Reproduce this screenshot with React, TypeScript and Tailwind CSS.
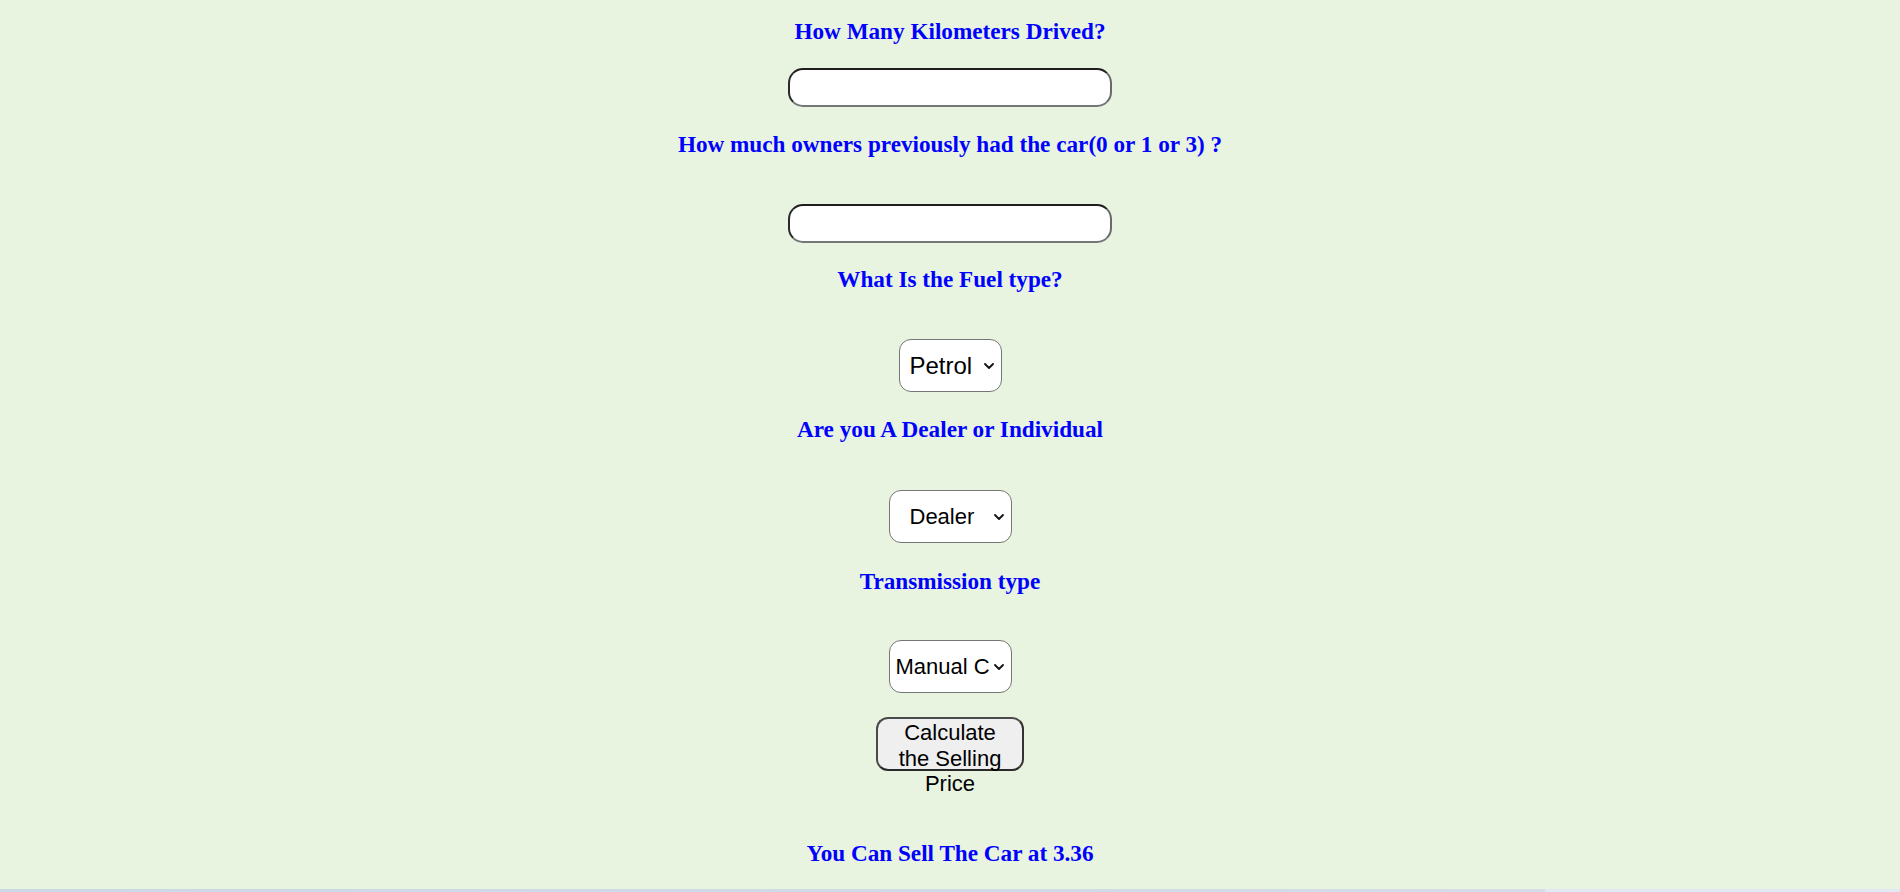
import { useState } from 'react'

const headingCls = "font-['Liberation_Serif',serif] text-[23.2px] leading-[26px] font-bold text-[#0000ff] text-center"
const inputCls = "w-[324px] h-[39px] rounded-[15px] border-2 border-t-[#1e1e1e] border-l-[#2a2a2a] border-b-[#767676] border-r-[#6a6a6a] bg-white px-3 outline-none"
const selectCls = "h-[53px] rounded-[12px] border border-[#767676] bg-white appearance-none font-['Liberation_Sans',Arial,sans-serif] text-black outline-none"

function Chevron() {
  return (
    <svg
      className="pointer-events-none absolute right-[8px] top-1/2 -translate-y-1/2"
      width="10"
      height="7"
      viewBox="0 0 10 7"
      fill="none"
    >
      <polyline points="1,1.5 5,5.5 9,1.5" stroke="#111" strokeWidth="1.8" strokeLinecap="round" strokeLinejoin="round" />
    </svg>
  )
}

export default function App() {
  const [kms, setKms] = useState('')
  const [owners, setOwners] = useState('')
  const [fuel, setFuel] = useState('Petrol')
  const [seller, setSeller] = useState('Dealer')
  const [trans, setTrans] = useState('Manual Car')

  return (
    <div className="h-[892px] bg-[#e8f4df] flex flex-col overflow-hidden">
      <div className="flex-1 flex flex-col items-center pt-[18px]">
        <h2 className={headingCls}>How Many Kilometers Drived?</h2>
        <input
          value={kms}
          onChange={(e) => setKms(e.target.value)}
          className={`${inputCls} mt-[24px]`}
        />

        <h2 className={`${headingCls} mt-[24px]`}>How much owners previously had the car(0 or 1 or 3) ?</h2>
        <input
          value={owners}
          onChange={(e) => setOwners(e.target.value)}
          className={`${inputCls} mt-[47px]`}
        />

        <h2 className={`${headingCls} mt-[23px]`}>What Is the Fuel type?</h2>
        <div className="relative mt-[47px]">
          <select
            value={fuel}
            onChange={(e) => setFuel(e.target.value)}
            className={`${selectCls} text-[24px] w-[103px] pl-[10px] pr-[20px]`}
          >
            <option>Petrol</option>
            <option>Diesel</option>
            <option>CNG</option>
          </select>
          <Chevron />
        </div>

        <h2 className={`${headingCls} mt-[24px]`}>Are you A Dealer or Individual</h2>
        <div className="relative mt-[48px]">
          <select
            value={seller}
            onChange={(e) => setSeller(e.target.value)}
            className={`${selectCls} text-[22px] w-[123px] pl-[20px] pr-[20px]`}
          >
            <option>Dealer</option>
            <option>Individual</option>
          </select>
          <Chevron />
        </div>

        <h2 className={`${headingCls} mt-[25px]`}>Transmission type</h2>
        <div className="relative mt-[46px]">
          <select
            value={trans}
            onChange={(e) => setTrans(e.target.value)}
            className={`${selectCls} text-[22px] w-[123px] pl-[6px] pr-[21px]`}
          >
            <option>Manual Car</option>
            <option>Automatic Car</option>
          </select>
          <Chevron />
        </div>

        <button className="mt-[24px] w-[148px] h-[54px] rounded-[12px] border-2 border-[#4a4a4a] border-b-[#2a2a2a] border-r-[#333] bg-[#efefef] px-[16px] pt-[1px] flex flex-col items-center justify-start overflow-visible font-['Liberation_Sans',Arial,sans-serif] text-[22px] leading-[25.5px] text-black text-center">
          <span className="block">Calculate the Selling Price</span>
        </button>

        <h3 className={`${headingCls} mt-[69px]`}>You Can Sell The Car at 3.36</h3>
      </div>
      <div className="h-[3px] flex">
        <div className="w-[1545px] bg-gradient-to-r from-[#cdd8e6] to-[#d3dce8]" />
        <div className="flex-1 bg-[#e0e9f4]" />
      </div>
    </div>
  )
}
